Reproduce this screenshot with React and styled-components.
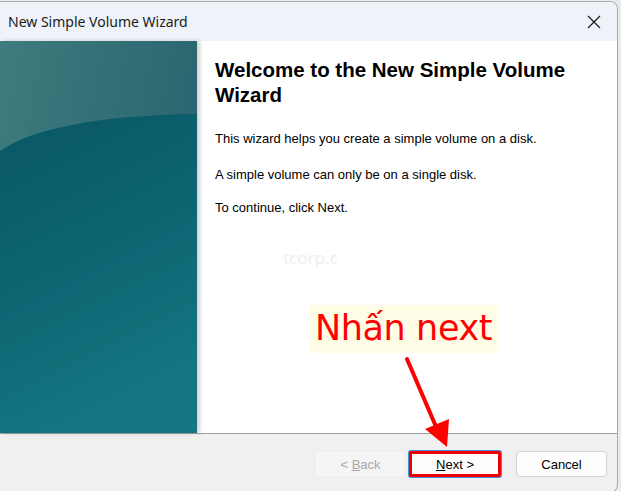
import styled, { createGlobalStyle } from "styled-components";

const GlobalStyle = createGlobalStyle`
  html, body {
    margin: 0;
    padding: 0;
    background: #e9ecef;
    font-family: "Liberation Sans", Arial, sans-serif;
  }
`;

export default function App() {
  return (
    <>
      <GlobalStyle />
      <Page>
        <Window>
          <TitleBar>
            <Title>New Simple Volume Wizard</Title>
            <CloseButton aria-label="Close">
              <svg width="14" height="14" viewBox="0 0 14 14">
                <path d="M1 1 L13 13 M13 1 L1 13" stroke="#1a1a1a" strokeWidth="1.2" />
              </svg>
            </CloseButton>
          </TitleBar>
          <Body>
            <SidePanel>
              <svg width="100%" height="100%" viewBox="0 0 197 392" preserveAspectRatio="none">
                <defs>
                  <linearGradient id="top" x1="0" y1="0" x2="1" y2="0.4">
                    <stop offset="0" stopColor="#3e7c7e" />
                    <stop offset="1" stopColor="#28646e" />
                  </linearGradient>
                  <linearGradient id="low" x1="0" y1="0" x2="0.3" y2="1">
                    <stop offset="0" stopColor="#095664" />
                    <stop offset="0.5" stopColor="#0d6471" />
                    <stop offset="1" stopColor="#137680" />
                  </linearGradient>
                </defs>
                <rect x="0" y="0" width="197" height="392" fill="url(#top)" />
                <path d="M0 110 C30 88 100 74 197 73 L197 392 L0 392 Z" fill="url(#low)" />
              </svg>
            </SidePanel>
            <Content>
              <Heading>Welcome to the New Simple Volume Wizard</Heading>
              <Paragraph gap={24}>This wizard helps you create a simple volume on a disk.</Paragraph>
              <Paragraph gap={21}>A simple volume can only be on a single disk.</Paragraph>
              <Paragraph gap={18}>To continue, click Next.</Paragraph>
              <Watermark>tcorp.c</Watermark>
            </Content>
          </Body>
          <Footer>
            <Button disabled>
              &lt; <u>B</u>ack
            </Button>
            <Button primary>
              <u>N</u>ext &gt;
            </Button>
            <Button cancel>Cancel</Button>
          </Footer>
          <Callout>Nhấn next</Callout>
          <Arrow width="60" height="100" viewBox="0 0 60 100">
            <path d="M4 4 L34 74" stroke="#ff0000" strokeWidth="4" strokeLinecap="round" />
            <path d="M22 74 L46 64 L44 92 Z" fill="#ff0000" />
          </Arrow>
        </Window>
      </Page>
    </>
  );
}

const Page = styled.div`
  width: 621px;
  height: 491px;
  overflow: hidden;
  position: relative;
`;

const Window = styled.div`
  position: relative;
  width: 617px;
  height: 490px;
  background: #f0f0f0;
  border: 1px solid #a9a9a9;
  border-left: none;
  border-radius: 0 8px 8px 0;
  display: flex;
  flex-direction: column;
  overflow: hidden;
  margin-top: 1px;
`;

const TitleBar = styled.div`
  height: 39px;
  background: #eff3f9;
  display: flex;
  align-items: center;
  justify-content: space-between;
  padding: 0 0 0 8px;
  flex-shrink: 0;
`;

const Title = styled.span`
  font-family: "Noto Sans", "Open Sans", sans-serif;
  font-size: 14px;
  color: #1b1b1b;
`;

const CloseButton = styled.button`
  width: 46px;
  height: 39px;
  border: none;
  background: transparent;
  display: flex;
  align-items: center;
  justify-content: center;
  padding: 0;
`;

const Body = styled.div`
  flex: 1;
  display: flex;
  background: #ffffff;
  border-bottom: 1px solid #a0a0a0;
`;

const SidePanel = styled.div`
  width: 197px;
  flex-shrink: 0;
  box-shadow: 3px 0 4px rgba(0, 0, 0, 0.18);
  line-height: 0;
  z-index: 1;
`;

const Content = styled.div`
  flex: 1;
  position: relative;
  padding: 16px 20px 0 18px;
`;

const Heading = styled.h1`
  margin: 0;
  font-family: "Liberation Sans", Arial, sans-serif;
  font-weight: bold;
  font-size: 20.5px;
  line-height: 25px;
  color: #000;
`;

const Paragraph = styled.p`
  margin: ${(p) => p.gap}px 0 0;
  font-size: 13px;
  line-height: 15px;
  color: #000;
`;

const Watermark = styled.div`
  position: absolute;
  left: 86px;
  top: 205px;
  font-family: "Noto Sans", sans-serif;
  font-size: 17px;
  color: #efefef;
`;

const Footer = styled.div`
  height: 56px;
  flex-shrink: 0;
  display: flex;
  align-items: center;
  justify-content: flex-end;
  gap: 3px;
  padding: 2px 10px 0 0;
`;

const Button = styled.button`
  width: ${(p) => (p.primary ? 92 : 91)}px;
  height: 26px;
  margin-left: ${(p) => (p.cancel ? 12 : 0)}px;
  font-family: "Liberation Sans", Arial, sans-serif;
  font-size: 13px;
  color: ${(p) => (p.disabled ? "#a8a8a8" : "#000")};
  background: ${(p) => (p.disabled ? "#f5f5f5" : "#fdfdfd")};
  border: ${(p) => (p.primary ? "3px solid #ee0000" : "1px solid " + (p.disabled ? "#ececec" : "#d4d4d4"))};
  border-radius: ${(p) => (p.primary ? "2px" : "4px")};
  box-shadow: ${(p) => (p.primary ? "0 0 0 1px #4d8fd6" : "none")};
  padding: 0;
  u {
    text-decoration: underline;
  }
`;

const Callout = styled.div`
  position: absolute;
  left: 310px;
  top: 303px;
  padding: 0 5px;
  height: 48px;
  background: #fffde6;
  font-family: "DejaVu Sans", Verdana, sans-serif;
  font-size: 35px;
  letter-spacing: -0.4px;
  line-height: 46px;
  color: #ff0000;
`;

const Arrow = styled.svg`
  position: absolute;
  left: 403px;
  top: 353px;
`;
